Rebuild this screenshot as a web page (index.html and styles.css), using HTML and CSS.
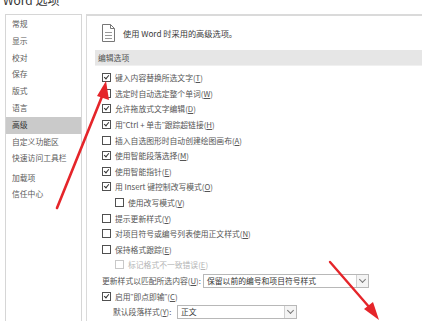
FILE: index.html
```html
<!DOCTYPE html>
<html lang="zh-CN">
<head>
    <meta charset="UTF-8">
    <title>Word 选项</title>
    <link rel="stylesheet" href="styles.css">
</head>
<body>
    <div class="title"><span>Word 选项</span></div>
    <div class="dialog">
        <ul class="nav">
            <li>常规</li>
            <li>显示</li>
            <li>校对</li>
            <li>保存</li>
            <li>版式</li>
            <li>语言</li>
            <li class="active">高级</li>
            <li>自定义功能区</li>
            <li>快速访问工具栏</li>
            <li class="sep">加载项</li>
            <li>信任中心</li>
        </ul>
        <div class="pane">
            <div class="pane-head">
                <svg class="doc-icon" width="13" height="18" viewBox="0 0 13 18">
                    <path d="M0.5 0.5 H8.5 L12.5 4.5 V17.5 H0.5 Z" fill="#fff" stroke="#777"/>
                    <path d="M8.5 0.5 V4.5 H12.5" fill="none" stroke="#777"/>
                    <path d="M3 8.5 H10 M3 11.5 H10 M3 14.5 H10" stroke="#999"/>
                </svg>
                <span>使用 Word 时采用的高级选项。</span>
            </div>
            <div class="section">编辑选项</div>
            <div class="rows">
                <div class="row"><i class="box on"></i>键入内容替换所选文字(<u>T</u>)</div>
                <div class="row"><i class="box"></i>选定时自动选定整个单词(<u>W</u>)</div>
                <div class="row"><i class="box on"></i>允许拖放式文字编辑(<u>D</u>)</div>
                <div class="row"><i class="box on"></i>用<q>"</q>Ctrl + 单击<q>"</q>跟踪超链接(<u>H</u>)</div>
                <div class="row"><i class="box"></i>插入自选图形时自动创建绘图画布(<u>A</u>)</div>
                <div class="row"><i class="box on"></i>使用智能段落选择(<u>M</u>)</div>
                <div class="row"><i class="box on"></i>使用智能指针(<u>E</u>)</div>
                <div class="row"><i class="box on"></i>用 Insert 键控制改写模式(<u>O</u>)</div>
                <div class="row sub"><i class="box"></i>使用改写模式(<u>V</u>)</div>
                <div class="row"><i class="box"></i>提示更新样式(<u>Y</u>)</div>
                <div class="row"><i class="box"></i>对项目符号或编号列表使用正文样式(<u>N</u>)</div>
                <div class="row"><i class="box"></i>保持格式跟踪(<u>E</u>)</div>
                <div class="row sub off"><i class="box"></i>标记格式不一致错误(<u>E</u>)</div>
                <div class="row">
                    <span class="label">更新样式以匹配所选内容(<u>U</u>):</span>
                    <span class="select long">保留以前的编号和项目符号样式<b class="arrow"></b></span>
                </div>
                <div class="row"><i class="box on"></i>启用<q>"</q>即点即输<q>"</q>(<u>C</u>)</div>
                <div class="row sub2">
                    <span class="label">默认段落样式(<u>Y</u>):</span>
                    <span class="select short">正文<b class="arrow"></b></span>
                </div>
            </div>
        </div>
    </div>
    <svg class="marks" width="422" height="321" viewBox="0 0 422 321">
        <line x1="57" y1="208" x2="103" y2="94" stroke="#e5252a" stroke-width="2.6" stroke-linecap="round"/>
        <polygon points="106,81 109,100 97,96" fill="#e5252a"/>
        <line x1="330" y1="262" x2="370" y2="308" stroke="#e5252a" stroke-width="2.4" stroke-linecap="round"/>
        <polygon points="379,320 364,309 373,302" fill="#e5252a"/>
    </svg>
</body>
</html>
```

FILE: styles.css
```css
body {
    margin: 0;
    width: 422px;
    height: 321px;
    overflow: hidden;
    position: relative;
    background: #ffffff;
    color: #555555;
    font-family: "Noto Sans CJK SC", "Noto Sans", sans-serif;
    font-size: 7.8px;
}

.title {
    height: 14px;
    overflow: hidden;
    padding-left: 3px;
}

.title span {
    display: block;
    margin-top: -7px;
    font-size: 12px;
    line-height: 14px;
    color: #333333;
}

.dialog {
    display: flex;
    gap: 4px;
    padding-left: 5px;
    height: 307px;
}

.nav {
    list-style: none;
    margin: 0;
    padding: 1px 0 0;
    width: 75px;
    border: 1px solid #d6d6d6;
    border-bottom: none;
}

.nav li {
    height: 16.8px;
    line-height: 16.8px;
    padding-left: 6px;
    color: #5a5a5a;
}

.nav li.active {
    background: #cacaca;
    color: #333333;
}

.nav li.sep {
    margin-top: 2.5px;
}

.pane {
    flex: 1;
    border-top: 2px solid #dadada;
    border-left: 1px solid #dadada;
    padding-left: 8px;
}

.pane-head {
    display: flex;
    align-items: center;
    gap: 8px;
    height: 34px;
    padding-left: 7px;
    font-size: 8.2px;
    color: #3a3a3a;
}

.section {
    height: 15px;
    line-height: 15px;
    padding-left: 3px;
    background: #e6e6e6;
    border-bottom: 1px solid #f0f0f0;
    color: #505050;
}

.rows {
    padding-top: 4px;
}

.row {
    display: flex;
    align-items: center;
    height: 15.6px;
    padding-left: 7px;
    white-space: nowrap;
}

.row q {
    quotes: none;
    font-family: "Liberation Sans", sans-serif;
}

.row.sub {
    padding-left: 20px;
}

.row.sub2 {
    padding-left: 18px;
}

.row.off {
    color: #b4b4b4;
}

.box {
    display: inline-block;
    width: 7px;
    height: 7px;
    border: 1px solid #505050;
    background: #ffffff;
    margin-right: 4px;
    position: relative;
}

.box.on::after {
    content: "";
    position: absolute;
    left: 2px;
    top: 0;
    width: 2px;
    height: 4px;
    border-right: 1px solid #333333;
    border-bottom: 1px solid #333333;
    transform: rotate(40deg);
}

.row.off .box {
    border-color: #c8c8c8;
}

.label {
    width: 101px;
}

.sub2 .label {
    width: 64px;
}

.select {
    position: relative;
    box-sizing: border-box;
    height: 14px;
    line-height: 12px;
    padding-left: 3px;
    border: 1px solid #b8b8b8;
    color: #333333;
    background: #ffffff;
}

.select.long {
    width: 166px;
}

.select.short {
    width: 120px;
}

.arrow {
    position: absolute;
    right: 0;
    top: 0;
    width: 11px;
    height: 12px;
    background: #f4f4f4;
    border-left: 1px solid #d0d0d0;
}

.arrow::after {
    content: "";
    position: absolute;
    left: 3px;
    top: 2px;
    width: 4px;
    height: 4px;
    border-right: 1px solid #777777;
    border-bottom: 1px solid #777777;
    transform: rotate(45deg);
}

.marks {
    position: absolute;
    left: 0;
    top: 0;
    pointer-events: none;
}
```
